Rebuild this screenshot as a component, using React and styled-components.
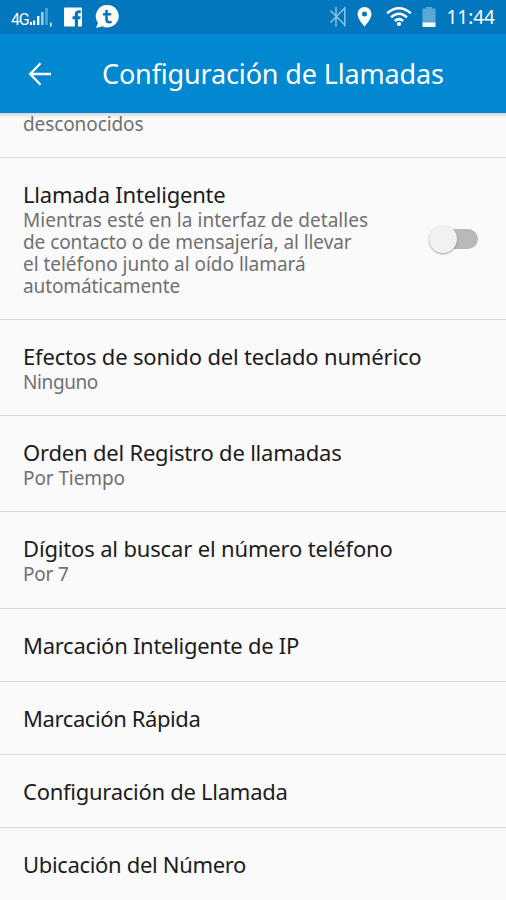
import styled, { createGlobalStyle } from 'styled-components';

const settings = [
  {
    title: 'Llamada Inteligente',
    spacing: -0.22,
    lines: [
      { text: 'Mientras esté en la interfaz de detalles', spacing: 0.03 },
      { text: 'de contacto o de mensajería, al llevar', spacing: -0.07 },
      { text: 'el teléfono junto al oído llamará', spacing: -0.03 },
      { text: 'automáticamente', spacing: -0.1 },
    ],
    height: 162,
    hasSwitch: true,
  },
  {
    title: 'Efectos de sonido del teclado numérico',
    spacing: -0.18,
    lines: [{ text: 'Ninguno', spacing: -0.4 }],
    height: 96,
  },
  {
    title: 'Orden del Registro de llamadas',
    spacing: -0.2,
    lines: [{ text: 'Por Tiempo', spacing: -0.1 }],
    height: 96,
  },
  {
    title: 'Dígitos al buscar el número teléfono',
    spacing: -0.16,
    lines: [{ text: 'Por 7', spacing: -0.2 }],
    height: 97,
  },
  { title: 'Marcación Inteligente de IP', spacing: -0.28, height: 73 },
  { title: 'Marcación Rápida', spacing: -0.4, height: 73 },
  { title: 'Configuración de Llamada', spacing: -0.27, height: 73 },
  { title: 'Ubicación del Número', spacing: -0.33, height: 73 },
];

function SignalIcon() {
  return (
    <svg width="23" height="34" viewBox="0 0 23 34">
      <path d="M1 22h2v3H1z M4 20.5h2.2V25H4z M8 16h2.4v9H8z" fill="#fff" />
      <path d="M12 12h2.6v13H12z" fill="#9ccbe7" />
      <path d="M16 8h3v17h-3z" fill="#4a9fd2" />
      <path d="M21 22.5h1.7v3L21.8 27H21z" fill="#cfe5f3" />
    </svg>
  );
}

function FacebookIcon() {
  return (
    <svg width="18" height="34" viewBox="0 0 18 34">
      <path
        d="M1 7.500h16q1 0 1 1v17q0 1-1 1h-3V19.200h2.300l.4-2.900H14v-1.800c0-1 .4-1.500 1.500-1.500h1.300v-2.700c-3.800-.6-6 .6-6 3.800v2.200H8.500v2.900h2.300v7.300H1q-1 0-1-1v-17q0-1 1-1z"
        fill="#fff"
      />
    </svg>
  );
}

function ChatIcon() {
  return (
    <svg width="24" height="34" viewBox="0 0 24 34">
      <path
        d="M12.500 5a11.200 11.200 0 1 1-5 21.200L1 28l2-5.200A11.200 11.200 0 0 1 12.500 5z"
        fill="#fff"
      />
      <path
        d="M11.500 10v9.200q0 3 2.800 3 1.300 0 2.200-.6M8 14.200h8.200"
        fill="none"
        stroke="#0277bd"
        strokeWidth="2.6"
      />
    </svg>
  );
}

function BluetoothIcon() {
  return (
    <svg width="17" height="34" viewBox="0 0 17 34">
      <path
        d="M.5 10.500L14.800 25M.5 22.500L14.800 8M6 7v19.500M14.800 7v19.500"
        fill="none"
        stroke="#8cc4e5"
        strokeWidth="1.5"
      />
    </svg>
  );
}

function LocationIcon() {
  return (
    <svg width="15" height="34" viewBox="0 0 15 34">
      <path
        d="M7.500 7A7 7 0 0 0 .5 14c0 5 7 12.500 7 12.500S14.500 19 14.500 14a7 7 0 0 0-7-7zm0 4.500a2.500 2.500 0 1 1 0 5 2.500 2.500 0 0 1 0-5z"
        fill="#fff"
        fillRule="evenodd"
      />
    </svg>
  );
}

function WifiIcon() {
  return (
    <svg width="26" height="34" viewBox="0 0 26 34">
      <g fill="none" stroke="#fff" strokeWidth="2.5">
        <path d="M1.200 13.200Q13 3.200 24.800 13.200" />
        <path d="M5 17.200Q13 10.200 21 17.200" />
        <path d="M8.800 21Q13 17.200 17.200 21" />
      </g>
      <circle cx="13" cy="24" r="2.1" fill="#fff" />
    </svg>
  );
}

function BatteryIcon() {
  return (
    <svg width="14" height="34" viewBox="0 0 14 34">
      <path d="M4 7h6v1.500h3.500V23H.5V8.500H4z" fill="#5ba8d7" />
      <path d="M.5 22.500h13V27H.5z" fill="#fff" />
    </svg>
  );
}

function StatusBar() {
  return (
    <StatusWrap>
      <StatusGroup>
        <Network>4G</Network>
        <SignalIcon />
        <Icon $left={12}>
          <FacebookIcon />
        </Icon>
        <Icon $left={13}>
          <ChatIcon />
        </Icon>
      </StatusGroup>
      <StatusGroup>
        <BluetoothIcon />
        <Icon $left={10}>
          <LocationIcon />
        </Icon>
        <Icon $left={14}>
          <WifiIcon />
        </Icon>
        <Icon $left={10}>
          <BatteryIcon />
        </Icon>
        <Clock>11:44</Clock>
      </StatusGroup>
    </StatusWrap>
  );
}

function SettingRow({ item }) {
  return (
    <Row $height={item.height}>
      <div>
        <Name $spacing={item.spacing}>{item.title}</Name>
        {item.lines && (
          <Details>
            {item.lines.map((line) => (
              <Summary key={line.text} $spacing={line.spacing}>
                {line.text}
              </Summary>
            ))}
          </Details>
        )}
      </div>
      {item.hasSwitch && (
        <SwitchTrack>
          <SwitchThumb />
        </SwitchTrack>
      )}
    </Row>
  );
}

function App() {
  return (
    <Screen>
      <GlobalStyle />
      <StatusBar />
      <AppBar>
        <svg width="24" height="24" viewBox="0 0 24 24">
          <path
            d="M23 12H2M12.500 1.300L2.200 12l10.300 10.700"
            fill="none"
            stroke="#fff"
            strokeWidth="2.3"
          />
        </svg>
        <Title>Configuración de Llamadas</Title>
      </AppBar>
      <List>
        <ScrolledRow>
          <Summary $spacing={-0.1}>desconocidos</Summary>
        </ScrolledRow>
        {settings.map((item) => (
          <SettingRow key={item.title} item={item} />
        ))}
      </List>
    </Screen>
  );
}

export default App;

const GlobalStyle = createGlobalStyle`
  body {
    margin: 0;
    font-family: 'Noto Sans', sans-serif;
  }
`;

const Screen = styled.div`
  width: 506px;
  height: 900px;
  overflow: hidden;
  background: #fafafa;
`;

const StatusWrap = styled.div`
  display: flex;
  justify-content: space-between;
  box-sizing: border-box;
  height: 34px;
  padding: 0 11px;
  background: #0277bd;
`;

const StatusGroup = styled.div`
  display: flex;
  align-items: center;

  svg {
    display: block;
  }
`;

const Icon = styled.span`
  margin-left: ${({ $left }) => $left}px;
`;

const Network = styled.span`
  width: 18px;
  padding-top: 5px;
  font-family: Roboto, sans-serif;
  font-size: 16px;
  line-height: 20px;
  letter-spacing: -1.2px;
  color: #fff;
`;

const Clock = styled.span`
  margin-left: 10px;
  font-size: 19px;
  line-height: 35px;
  color: #fff;
`;

const AppBar = styled.header`
  display: flex;
  align-items: center;
  box-sizing: border-box;
  height: 79px;
  padding-left: 28px;
  background: #0288d1;
`;

const Title = styled.h1`
  margin: 0 0 0 50px;
  font-size: 27px;
  font-weight: 400;
  letter-spacing: -0.15px;
  white-space: nowrap;
  color: #fff;
`;

const List = styled.main`
  background: linear-gradient(#d3d5d7, #fafafa 5px);
`;

const Row = styled.div`
  display: flex;
  align-items: center;
  justify-content: space-between;
  box-sizing: border-box;
  height: ${({ $height }) => $height}px;
  padding: 0 28px 0 23px;
  border-bottom: 1px solid #dadada;
`;

const ScrolledRow = styled(Row)`
  align-items: flex-start;
  height: 45px;
`;

const Name = styled.div`
  font-size: 22px;
  line-height: 26px;
  letter-spacing: ${({ $spacing }) => $spacing}px;
  white-space: nowrap;
  color: #1c1c1c;
`;

const Details = styled.div`
  margin-top: 2px;
`;

const Summary = styled.div`
  font-size: 19px;
  line-height: 22px;
  letter-spacing: ${({ $spacing }) => $spacing}px;
  white-space: nowrap;
  color: #707070;
`;

const SwitchTrack = styled.div`
  display: flex;
  align-items: center;
  width: 49px;
  height: 20px;
  border-radius: 10px;
  background: #b9b9b9;
`;

const SwitchThumb = styled.div`
  flex: none;
  width: 28px;
  height: 28px;
  border-radius: 50%;
  background: #f1f1f1;
  box-shadow: 0 1px 2px rgba(0, 0, 0, 0.35);
`;
